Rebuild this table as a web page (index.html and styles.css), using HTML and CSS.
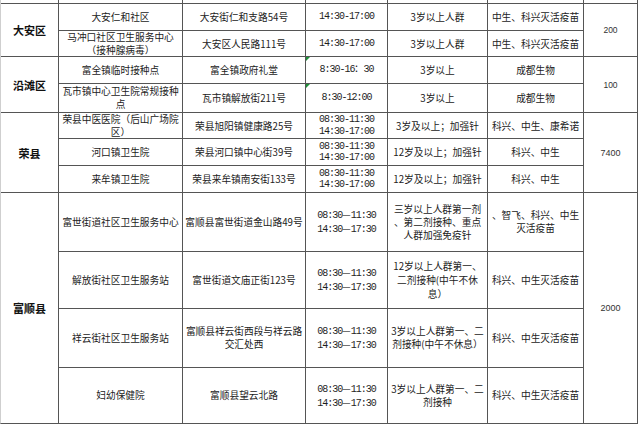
FILE: index.html
```html
<!DOCTYPE html>
<html lang="zh-CN">
<head>
<meta charset="utf-8">
<title>接种点</title>
<link rel="stylesheet" href="styles.css">
</head>
<body>
<div class="sheet">
  <div class="cell"></div><div class="cell"></div><div class="cell"></div><div class="cell"></div><div class="cell"></div><div class="cell"></div><div class="cell"></div>

  <div class="cell region span2">大安区</div>
  <div class="cell">大安仁和社区</div>
  <div class="cell">大安街仁和支路54号</div>
  <div class="cell time">14:30-17:00</div>
  <div class="cell">3岁以上人群</div>
  <div class="cell">中生、科兴灭活疫苗</div>
  <div class="cell count span2">200</div>

  <div class="cell two">马冲口社区卫生服务中心<br>（接种腺病毒）</div>
  <div class="cell">大安区人民路111号</div>
  <div class="cell time">14:30-17:00</div>
  <div class="cell">3岁以上人群</div>
  <div class="cell">中生、科兴灭活疫苗</div>

  <div class="cell region span2">沿滩区</div>
  <div class="cell">富全镇临时接种点</div>
  <div class="cell">富全镇政府礼堂</div>
  <div class="cell time flag">8:30-16：30</div>
  <div class="cell">3岁以上</div>
  <div class="cell">成都生物</div>
  <div class="cell count span2">100</div>

  <div class="cell tall">瓦市镇中心卫生院常规接种<br>点</div>
  <div class="cell">瓦市镇解放街211号</div>
  <div class="cell time flag">8:30-12:00</div>
  <div class="cell">3岁以上</div>
  <div class="cell">成都生物</div>

  <div class="cell region span3">荣县</div>
  <div class="cell two">荣县中医医院（后山广场院<br>区）</div>
  <div class="cell">荣县旭阳镇健康路25号</div>
  <div class="cell time tight">08:30-11:30<br>14:30-17:00</div>
  <div class="cell">3岁及以上；加强针</div>
  <div class="cell">科兴、中生、康希诺</div>
  <div class="cell count big span3">7400</div>

  <div class="cell">河口镇卫生院</div>
  <div class="cell">荣县河口镇中心街39号</div>
  <div class="cell time tight">08:30-11:30<br>14:30-17:00</div>
  <div class="cell">12岁及以上；加强针</div>
  <div class="cell">科兴、中生</div>

  <div class="cell">来牟镇卫生院</div>
  <div class="cell">荣县来牟镇南安街133号</div>
  <div class="cell time tight">08:30-11:30<br>14:30-17:00</div>
  <div class="cell">12岁及以上；加强针</div>
  <div class="cell">科兴、中生</div>

  <div class="cell region span4">富顺县</div>
  <div class="cell tall">富世街道社区卫生服务中心</div>
  <div class="cell tall">富顺县富世街道金山路49号</div>
  <div class="cell time tall"><span class="lines">08:30<span class="dash">—</span>11:30<br>14:30<span class="dash">—</span>17:30</span></div>
  <div class="cell tall">三岁以上人群第一剂<br>、第二剂接种、重点<br>人群加强免疫针</div>
  <div class="cell tall">、智飞、科兴、中生<br>灭活疫苗</div>
  <div class="cell count big span4">2000</div>

  <div class="cell tall">解放街社区卫生服务站</div>
  <div class="cell tall">富世街道文庙正街123号</div>
  <div class="cell time tall"><span class="lines">08:30<span class="dash">—</span>11:30<br>14:30<span class="dash">—</span>17:30</span></div>
  <div class="cell tall wide">12岁以上人群第一、<br>二剂接种(中午不休<br>息）</div>
  <div class="cell tall">科兴、中生灭活疫苗</div>

  <div class="cell tall">祥云街社区卫生服务站</div>
  <div class="cell tall">富顺县祥云街西段与祥云路<br>交汇处西</div>
  <div class="cell time tall"><span class="lines">08:30<span class="dash">—</span>11:30<br>14:30<span class="dash">—</span>17:30</span></div>
  <div class="cell tall">3岁以上人群第一、二<br>剂接种(中午不休息）</div>
  <div class="cell tall">科兴、中生灭活疫苗</div>

  <div class="cell tall">妇幼保健院</div>
  <div class="cell tall">富顺县望云北路</div>
  <div class="cell time tall"><span class="lines">08:30<span class="dash">—</span>11:30<br>14:30<span class="dash">—</span>17:30</span></div>
  <div class="cell tall">3岁以上人群第一、二<br>剂接种</div>
  <div class="cell tall">科兴、中生灭活疫苗</div>
</div>
</body>
</html>
```
FILE: styles.css
```css
html, body {
  margin: 0;
  padding: 0;
  background: #ffffff;
}

body {
  font-family: "Noto Sans CJK SC", "Noto Sans", sans-serif;
  font-size: 9.7px;
  color: #222222;
}

.sheet {
  display: grid;
  width: 638px;
  box-sizing: border-box;
  grid-template-columns: 57px 123px 122px 81px 99px 95px 53px;
  grid-template-rows: 3px 26px 25px 26px 28px 25px 26px 26px 58px 56px 58px 55px;
  gap: 1px;
  background: #555555;
  border-left: 1px solid #cfcfcf;
  border-right: 1px solid #555555;
  border-bottom: 1px solid #555555;
}

.cell {
  background: #ffffff;
  display: flex;
  align-items: center;
  justify-content: center;
  text-align: center;
  white-space: nowrap;
  line-height: 12px;
  overflow: hidden;
  position: relative;
}

.region {
  font-weight: bold;
  font-size: 11px;
  color: #111111;
}

.span2 { grid-row: span 2; }
.span3 { grid-row: span 3; }
.span4 { grid-row: span 4; }

.count {
  font-family: "Liberation Sans", sans-serif;
  font-size: 8.5px;
  color: #333333;
}

.count.big {
  font-size: 9px;
}

.time {
  font-family: "Liberation Mono", monospace;
  font-size: 10px;
  letter-spacing: -1px;
  color: #1e1e1e;
}

.lines {
  display: block;
}

.dash {
  font-family: "Noto Sans CJK SC", sans-serif;
  font-size: 9.4px;
  letter-spacing: 0;
}

.two {
  line-height: 12.5px;
}

.tight {
  line-height: 11.5px;
}

.tall {
  line-height: 13px;
}

.wide {
  line-height: 14px;
}

.flag::before {
  content: "";
  position: absolute;
  left: 0;
  top: 0;
  width: 0;
  height: 0;
  border-top: 4px solid #1f8f3a;
  border-right: 4px solid transparent;
}
```
